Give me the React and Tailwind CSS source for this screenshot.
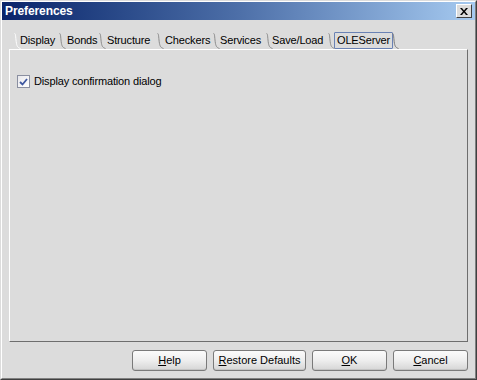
import React from 'react';

const TABS = [
  { label: 'Display', w: 'w-[45px]', pad: 'pl-[6px]', first: true },
  { label: 'Bonds', w: 'w-[40px]', pad: 'pl-[8px]' },
  { label: 'Structure', w: 'w-[58px]', pad: 'pl-[8px]' },
  { label: 'Checkers', w: 'w-[56px]', pad: 'pl-[8px]' },
  { label: 'Services', w: 'w-[53px]', pad: 'pl-[7px]' },
  { label: 'Save/Load', w: 'w-[62px]', pad: 'pl-[6px]' },
];

function Slant({ color = '#8c8c8c', light = false }) {
  return (
    <svg width="7" height="17" viewBox="0 0 7 17" className="absolute left-0 top-0">
      <path d="M0.5 1.5 C1.5 1.5 1.5 3 2 8 C2.5 13 3 15.5 6.5 16.5" fill="none" stroke={light ? '#ffffff' : color} strokeWidth="1" />
    </svg>
  );
}

function Btn({ children, wide }) {
  return (
    <button
      className={`${wide ? 'w-[93px]' : 'w-[75px]'} h-[21px] rounded-[3px] border border-[#7a7a7a] bg-gradient-to-b from-[#fbfbfb] via-[#eeeeee] to-[#d6d6d6] text-[11px] text-black flex items-center justify-center shadow-[inset_0_-1px_0_#c4c4c4]`}
    >
      {children}
    </button>
  );
}

export default function App() {
  return (
    <div className="w-[477px] h-[380px] bg-[#dcdcdc] border border-t-[#dcdcdc] border-l-[#dcdcdc] border-r-[#404040] border-b-[#404040] font-['Liberation_Sans',Arial,sans-serif] select-none">
      <div className="h-full flex flex-col border border-t-white border-l-white border-r-[#808080] border-b-[#808080]">
        {/* Title bar */}
        <div className="h-[18px] flex items-center justify-between pl-[3px] pr-[3px] bg-gradient-to-r from-[#0a246a] via-[#4d6fa8] to-[#a6caf0]">
          <span className="text-[12px] font-bold text-white leading-none tracking-[-0.1px]">Preferences</span>
          <div className="w-[16px] h-[14px] bg-[#dcdcdc] border border-t-white border-l-white border-r-[#404040] border-b-[#404040] flex items-center justify-center">
            <svg width="8" height="7" viewBox="0 0 8 7">
              <path d="M0 0 L2 0 L4 2.5 L6 0 L8 0 L5 3.5 L8 7 L6 7 L4 4.5 L2 7 L0 7 L3 3.5 Z" fill="#000" />
            </svg>
          </div>
        </div>

        {/* Tabs */}
        <div className="mt-[12px] ml-[12px] h-[17px] flex text-[11px] text-black tracking-[-0.15px]">
          {TABS.map((t) => (
            <div key={t.label} className={`relative ${t.w} h-full flex items-center ${t.pad}`}>
              <Slant light={t.first} />
              <span className="leading-none">{t.label}</span>
            </div>
          ))}
          <div className="relative h-full flex items-center pl-[6px] pr-[6px]">
            <Slant />
            <span className="leading-none px-[2px] py-[2px] border border-[#6a82b4] rounded-[1px]">OLEServer</span>
            <svg width="7" height="17" viewBox="0 0 7 17" className="absolute right-0 top-0">
              <path d="M0.5 1.5 C1.5 1.5 1.5 3 2 8 C2.5 13 3 15.5 6.5 16.5" fill="none" stroke="#7a7a7a" strokeWidth="1" />
            </svg>
          </div>
        </div>

        {/* Panel */}
        <div className="ml-[7px] w-[459px] h-[293px] border border-t-white border-l-white border-r-[#6e6e6e] border-b-[#6e6e6e] pt-[25px] pl-[7px]">
          <label className="flex items-center gap-[4px] text-[11px] text-black tracking-[-0.15px]">
            <span className="w-[13px] h-[13px] border border-[#8a8fa0] bg-gradient-to-br from-[#e8e8ec] to-[#ffffff] flex items-center justify-center">
              <svg width="9" height="8" viewBox="0 0 9 8">
                <path d="M1 4 L3.5 6.5 L8 1" fill="none" stroke="#3f58a0" strokeWidth="1.8" />
              </svg>
            </span>
            <span className="leading-none">Display confirmation dialog</span>
          </label>
        </div>

        {/* Buttons */}
        <div className="mt-[8px] pr-[7px] flex justify-end gap-[6px]">
          <Btn><span><span className="underline">H</span>elp</span></Btn>
          <Btn wide><span><span className="underline">R</span>estore Defaults</span></Btn>
          <Btn><span><span className="underline">O</span>K</span></Btn>
          <Btn><span><span className="underline">C</span>ancel</span></Btn>
        </div>
      </div>
    </div>
  );
}
